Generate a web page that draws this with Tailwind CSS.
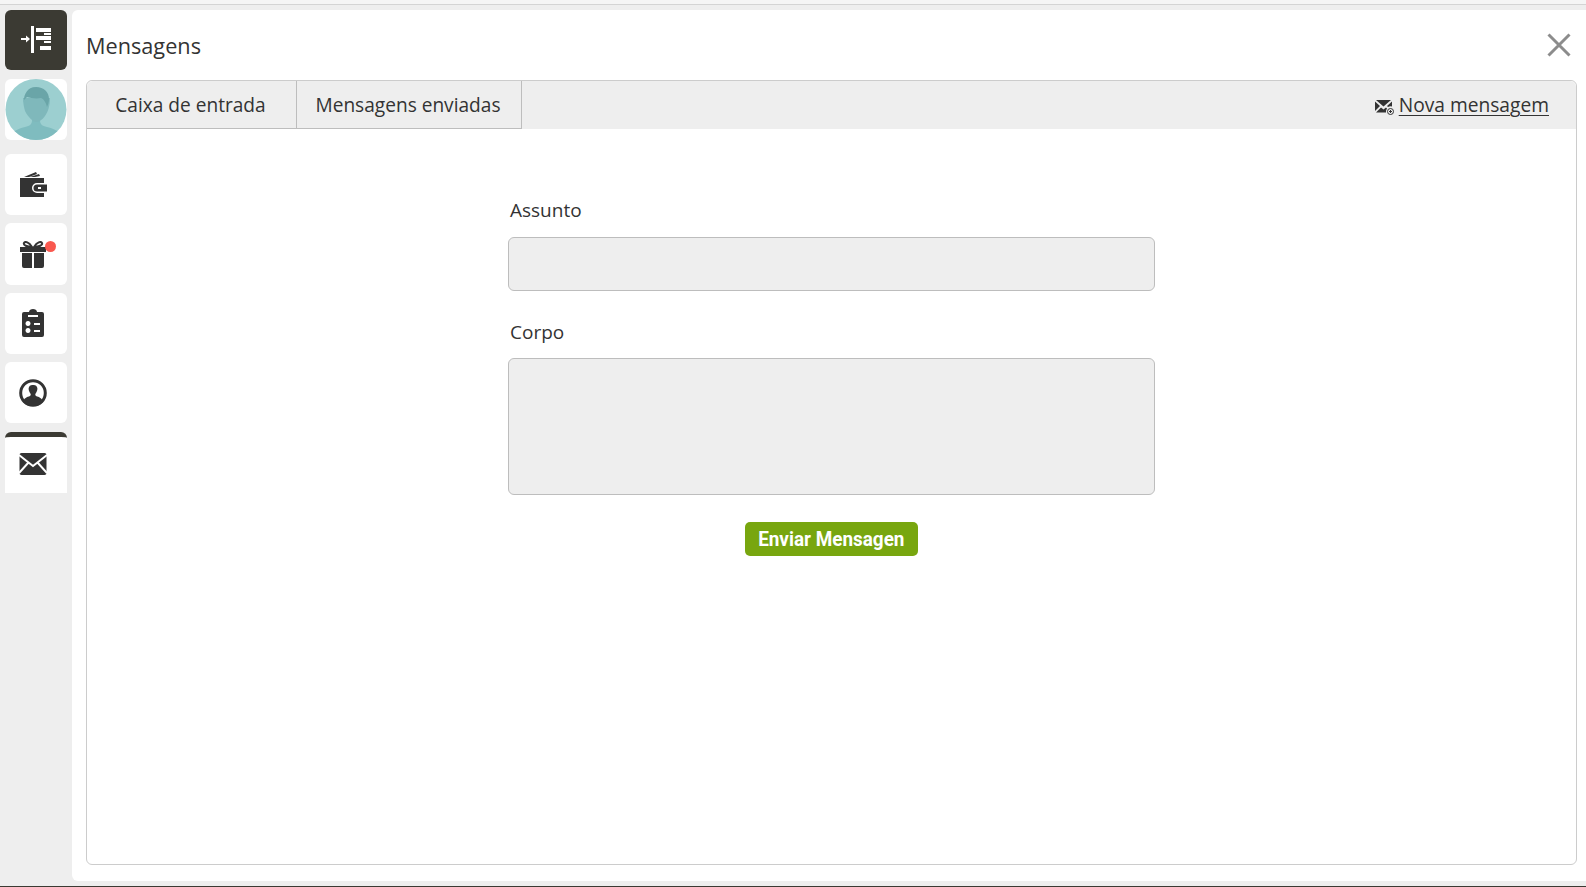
<!DOCTYPE html>
<html lang="pt">
<head>
<meta charset="UTF-8">
<title>Mensagens</title>
<script src="https://cdn.jsdelivr.net/npm/@tailwindcss/browser@4"></script>
</head>
<body class="h-[887px] w-[1586px] overflow-hidden bg-[#eeeeee] font-['Open_Sans',sans-serif] text-[#333333]">
  <!-- top strip -->
  <div class="h-[5px] bg-[#f5f5f5] border-b border-[#d4d4d4]"></div>

  <div class="flex h-[876px] pt-[5px]">
    <!-- Sidebar -->
    <aside class="w-[72px] shrink-0 pl-[5px] flex flex-col">
      <div class="w-[62px] h-[60px] rounded-md bg-[#3b3a33] flex items-center justify-center">
        <svg class="mt-[2px]" width="32" height="30" viewBox="0 0 32 30" fill="#ffffff">
          <rect x="11" y="0" width="3" height="27"/>
          <rect x="1" y="12" width="6" height="2"/>
          <path d="M6 9.500 10 13 6 16.500z"/>
          <rect x="16" y="2" width="15" height="4"/>
          <rect x="24" y="7" width="7" height="2"/>
          <rect x="16" y="10" width="15" height="4"/>
          <rect x="24" y="15" width="7" height="2"/>
          <rect x="20" y="20" width="11" height="4"/>
        </svg>
      </div>
      <div class="mt-[9px] w-[62px] h-[61px] rounded-md bg-white">
        <svg width="62" height="61" viewBox="0 0 62 61">
          <defs><clipPath id="av"><circle cx="31" cy="30.500" r="30.500"/></clipPath></defs>
          <circle cx="31" cy="30.500" r="30.500" fill="#9ccfd0"/>
          <g clip-path="url(#av)">
            <path d="M4 61c1-8 8-11 16-13 5-1 7-3 7-7h8c0 4 2 6 7 7 8 2 15 5 16 13z" fill="#7fbcbf"/>
            <path d="M24 32c-1-4-2-8-2-13h27c0 7-2 14-5 18-3 4-6 6-9 6s-8-5-11-11z" transform="translate(-4 0)" fill="#7fb8bb"/>
            <path d="M23 21c0-5 3-13 12-13 8 0 13 5 13 12 0 3-1 6-2 8-1-4-3-8-6-9-5 1-10 0-14-1-1 1-2 2-3 3z" transform="translate(-4 0)" fill="#6aa5a8"/>
          </g>
        </svg>
      </div>
      <div class="mt-[14px] w-[62px] h-[61px] rounded-md bg-white flex items-center justify-center pr-[7px]">
        <svg width="28" height="26" viewBox="0 0 28 26" fill="#333333">
          <path d="M5 5 17 0l1 2-8 3zM11 5l9-3 1 2-5 1z"/>
          <path d="M1 6h24v5h-7a5 5 0 0 0 0 10h7v4H1z"/>
          <path fill-rule="evenodd" d="M18 12.500h10v7H18a3.500 3.500 0 0 1 0-7zm1 2.500v2h3v-2z"/>
        </svg>
      </div>
      <div class="relative mt-[8px] w-[62px] h-[62px] rounded-md bg-white flex items-center justify-center pr-[7px] pt-[1px]">
        <svg width="28" height="28" viewBox="0 0 28 28" fill="#333333">
          <path d="M1 6h26v5H1zM3 12h10v15H5a2 2 0 0 1-2-2zM15 12h10v13a2 2 0 0 1-2 2h-8z"/>
          <path d="M13 6C10 1 6 0 5 2s3 4 8 4zM15 6c3-5 7-6 8-4s-3 4-8 4z" fill="none" stroke="#333333" stroke-width="2"/>
        </svg>
        <span class="absolute left-[40px] top-[18px] w-[11px] h-[11px] rounded-full bg-[#f9584f]"></span>
      </div>
      <div class="mt-[8px] w-[62px] h-[61px] rounded-md bg-white flex items-center justify-center pr-[7px] pb-[1px]">
        <svg width="22" height="28" viewBox="0 0 22 28" fill="#333333">
          <path fill-rule="evenodd" d="M2 3h5c0-2 2-3 4-3s4 1 4 3h5a2 2 0 0 1 2 2v21a2 2 0 0 1-2 2H2a2 2 0 0 1-2-2V5a2 2 0 0 1 2-2zm4 3v2h10V6zm0 6a2.500 2.500 0 1 0 .01 0zm6 2v2h6v-2zm-6 5a2.500 2.500 0 1 0 .01 0zm6 2v2h6v-2z"/>
        </svg>
      </div>
      <div class="mt-[8px] w-[62px] h-[61px] rounded-md bg-white flex items-center justify-center pr-[7px]">
        <svg width="28" height="28" viewBox="0 0 28 28">
          <circle cx="14" cy="14" r="12.300" fill="#ffffff" stroke="#333333" stroke-width="3"/>
          <path d="M4 23c1-4 4-5 7-6 1-1 1-2 0-3-1-2-2-4-1-6 1-2 3-2 4-2s3 0 4 2c1 2 0 4-1 6-1 1-1 2 0 3 3 1 6 2 7 6-3 3-6 4-10 4s-7-1-10-4z" fill="#333333"/>
        </svg>
      </div>
      <div class="mt-[9px] w-[62px] h-[61px] rounded-t-md bg-white border-t-[5px] border-[#3b3a33] flex items-center justify-center pr-[7px] pb-[3px]">
        <svg width="28" height="22" viewBox="0 0 28 22">
          <rect x="0.500" width="27" height="22" rx="2" fill="#333333"/>
          <path d="M0 2 14 13 28 2M0 20 9.500 9.500M28 20 18.500 9.500" fill="none" stroke="#ffffff" stroke-width="2"/>
        </svg>
      </div>
    </aside>

    <!-- Main panel -->
    <main class="flex-1 h-[871px] bg-white rounded-l-md pl-[14px] pr-[9px] flex flex-col">
      <header class="h-[70px] shrink-0 flex items-center justify-between">
        <h1 class="text-[21.700px] font-normal leading-none pt-[2px]">Mensagens</h1>
        <svg class="mr-[6px]" width="24" height="24" viewBox="0 0 24 24" stroke="#8c8c8c" stroke-width="3" fill="none">
          <path d="M1.500 1.500 22.500 22.500M22.500 1.500 1.500 22.500"/>
        </svg>
      </header>

      <section class="h-[785px] border border-[#cccccc] rounded-md flex flex-col">
        <nav class="h-[48px] shrink-0 bg-[#eeeeee] rounded-t-md flex items-stretch">
          <a class="w-[210px] pr-[2px] pt-[2px] border-r border-b border-[#bdbdbd] flex items-center justify-center text-[19.100px]">Caixa de entrada</a>
          <a class="w-[225px] pr-[2px] pt-[2px] border-r border-b border-[#bdbdbd] flex items-center justify-center text-[19.100px]">Mensagens enviadas</a>
          <div class="flex-1 flex items-center justify-end pr-[27px]">
            <svg class="mr-[5px] mt-[3px]" width="19" height="16" viewBox="0 0 19 16" fill="#333333">
              <path d="M1 1h15L8.500 7.500zM0 2.500l5 4.500-5 5zM17 2.500v5a5 5 0 0 0-4 .5L12 7zM1 13.500l5-5 2.500 2 2.500-2 1 1a5 5 0 0 0-1 4z"/>
              <circle cx="15.500" cy="12.500" r="3" fill="none" stroke="#333333" stroke-width="1"/>
              <path d="M15 11h1v3h-1zM14 12h3v1h-3z"/>
            </svg>
            <a class="text-[19.200px] underline underline-offset-[3px] decoration-1">Nova mensagem</a>
          </div>
        </nav>

        <form class="w-[647px] ml-[421px] pt-[68px] flex flex-col">
          <label class="pl-[2px] text-[19px] leading-[26px]">Assunto</label>
          <div class="mt-[14px] h-[54px] bg-[#eeeeee] border border-[#bdbdbd] rounded-[6px]"></div>
          <label class="mt-[28px] pl-[2px] text-[19px] leading-[26px]">Corpo</label>
          <div class="mt-[13px] h-[137px] bg-[#eeeeee] border border-[#bdbdbd] rounded-[6px]"></div>
          <div class="mt-[27px] flex justify-center">
            <button type="button" class="w-[173px] h-[34px] rounded-[5px] bg-[#78a60f] text-white font-['Roboto',sans-serif] font-bold text-[21px] flex items-center justify-center whitespace-nowrap pt-[1px]">
              <span class="inline-block scale-x-[.9]">Enviar Mensagen</span>
            </button>
          </div>
        </form>
      </section>
    </main>
  </div>

  <div class="h-[5px] bg-[#eeeeee]"></div>
  <div class="h-[1px] bg-[#3b3a33]"></div>
</body>
</html>
